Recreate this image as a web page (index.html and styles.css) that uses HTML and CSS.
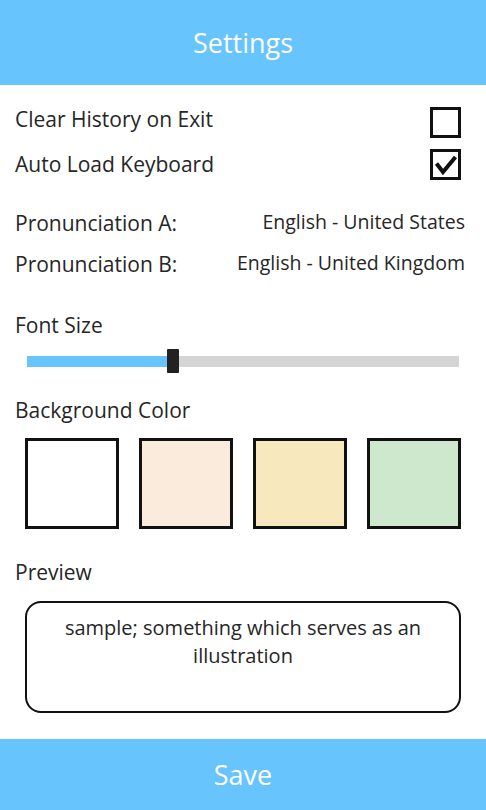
FILE: index.html
```html
<!DOCTYPE html>
<html lang="en">
<head>
	<title>Settings</title>
	<meta charset="utf-8">
	<meta name="viewport" content="width=device-width, initial-scale=1">

	<link rel="stylesheet" href="styles.css">
</head>

<body>
	<header class="title-bar">Settings</header>

	<main class="settings">
		<div class="row check-row">
			<span>Clear History on Exit</span>
			<svg class="check" width="31" height="31" viewBox="0 0 31 31">
				<rect x="1.5" y="1.5" width="28" height="28" fill="#fff" stroke="#111" stroke-width="3"/>
			</svg>
		</div>
		<div class="row check-row">
			<span>Auto Load Keyboard</span>
			<svg class="check" width="31" height="31" viewBox="0 0 31 31">
				<rect x="1.5" y="1.5" width="28" height="28" fill="#fff" stroke="#111" stroke-width="3"/>
				<polyline points="6.5,14.5 13,23 25.5,8" fill="none" stroke="#111" stroke-width="4" stroke-linejoin="miter"/>
			</svg>
		</div>

		<div class="pronunciations">
			<div class="row lang-row">
				<span>Pronunciation A:</span>
				<span class="lang">English - United States</span>
			</div>
			<div class="row lang-row">
				<span>Pronunciation B:</span>
				<span class="lang">English - United Kingdom</span>
			</div>
		</div>

		<div class="label font-label">Font Size</div>
		<div class="slider">
			<div class="slider-fill"></div>
			<div class="slider-thumb"></div>
			<div class="slider-rest"></div>
		</div>

		<div class="label">Background Color</div>
		<div class="swatches">
			<button class="swatch white"></button>
			<button class="swatch linen"></button>
			<button class="swatch cream"></button>
			<button class="swatch mint"></button>
		</div>

		<div class="label preview-label">Preview</div>
		<div class="preview">sample; something which serves as an illustration</div>
	</main>

	<footer class="save-bar">Save</footer>
</body>

</html>
```

FILE: styles.css
```css
html, body {
	height: 100%;
}
body {
	margin: 0;
	padding: 0;
	display: flex;
	flex-direction: column;
	font-family: "Open Sans", "Noto Sans", sans-serif;
	color: #262626;
	background: #fff;
}
.title-bar {
	height: 85px;
	display: flex;
	align-items: center;
	justify-content: center;
	background: #67c4fd;
	color: #fff;
	font-size: 27px;
}
.settings {
	flex: 1;
	padding: 16px 25px 0 15px;
}
.row {
	display: flex;
	align-items: center;
	justify-content: space-between;
	font-size: 21px;
}
.check-row {
	height: 42px;
}
.check-row:first-child span {
	margin-bottom: 6px;
}
.check {
	display: block;
}
.pronunciations {
	margin-top: 17px;
}
.lang-row {
	height: 41px;
}
.lang {
	font-size: 19.5px;
	margin: 0 -4px 3px 0;
}
.label {
	height: 30px;
	line-height: 30px;
	font-size: 21px;
	margin-top: 22px;
}
.font-label {
	margin-top: 26px;
}
.slider {
	display: flex;
	align-items: center;
	height: 24px;
	margin: 9px 2px 0 12px;
}
.slider-fill {
	width: 140px;
	height: 11px;
	background: #67c4fd;
}
.slider-thumb {
	width: 12px;
	height: 24px;
	background: #222;
	border-radius: 1px;
}
.slider-rest {
	flex: 1;
	height: 11px;
	background: #d5d5d5;
}
.swatches {
	display: grid;
	grid-template-columns: repeat(4, 1fr);
	gap: 20px;
	margin: 13px 0 0 10px;
}
.swatch {
	height: 91px;
	padding: 0;
	border: 3px solid #111;
	cursor: pointer;
}
.swatch.white {
	background: #fff;
}
.swatch.linen {
	background: #faebdc;
}
.swatch.cream {
	background: #f8e8be;
}
.swatch.mint {
	background: #cde8cd;
}
.preview-label {
	margin-top: 28px;
}
.preview {
	height: 112px;
	box-sizing: border-box;
	margin: 14px 0 0 10px;
	padding: 11px 10px 0;
	border: 2px solid #111;
	border-radius: 16px;
	text-align: center;
	font-size: 20px;
	line-height: 28px;
}
.save-bar {
	height: 71px;
	display: flex;
	align-items: center;
	justify-content: center;
	background: #67c4fd;
	color: #fff;
	font-size: 27px;
}
```
